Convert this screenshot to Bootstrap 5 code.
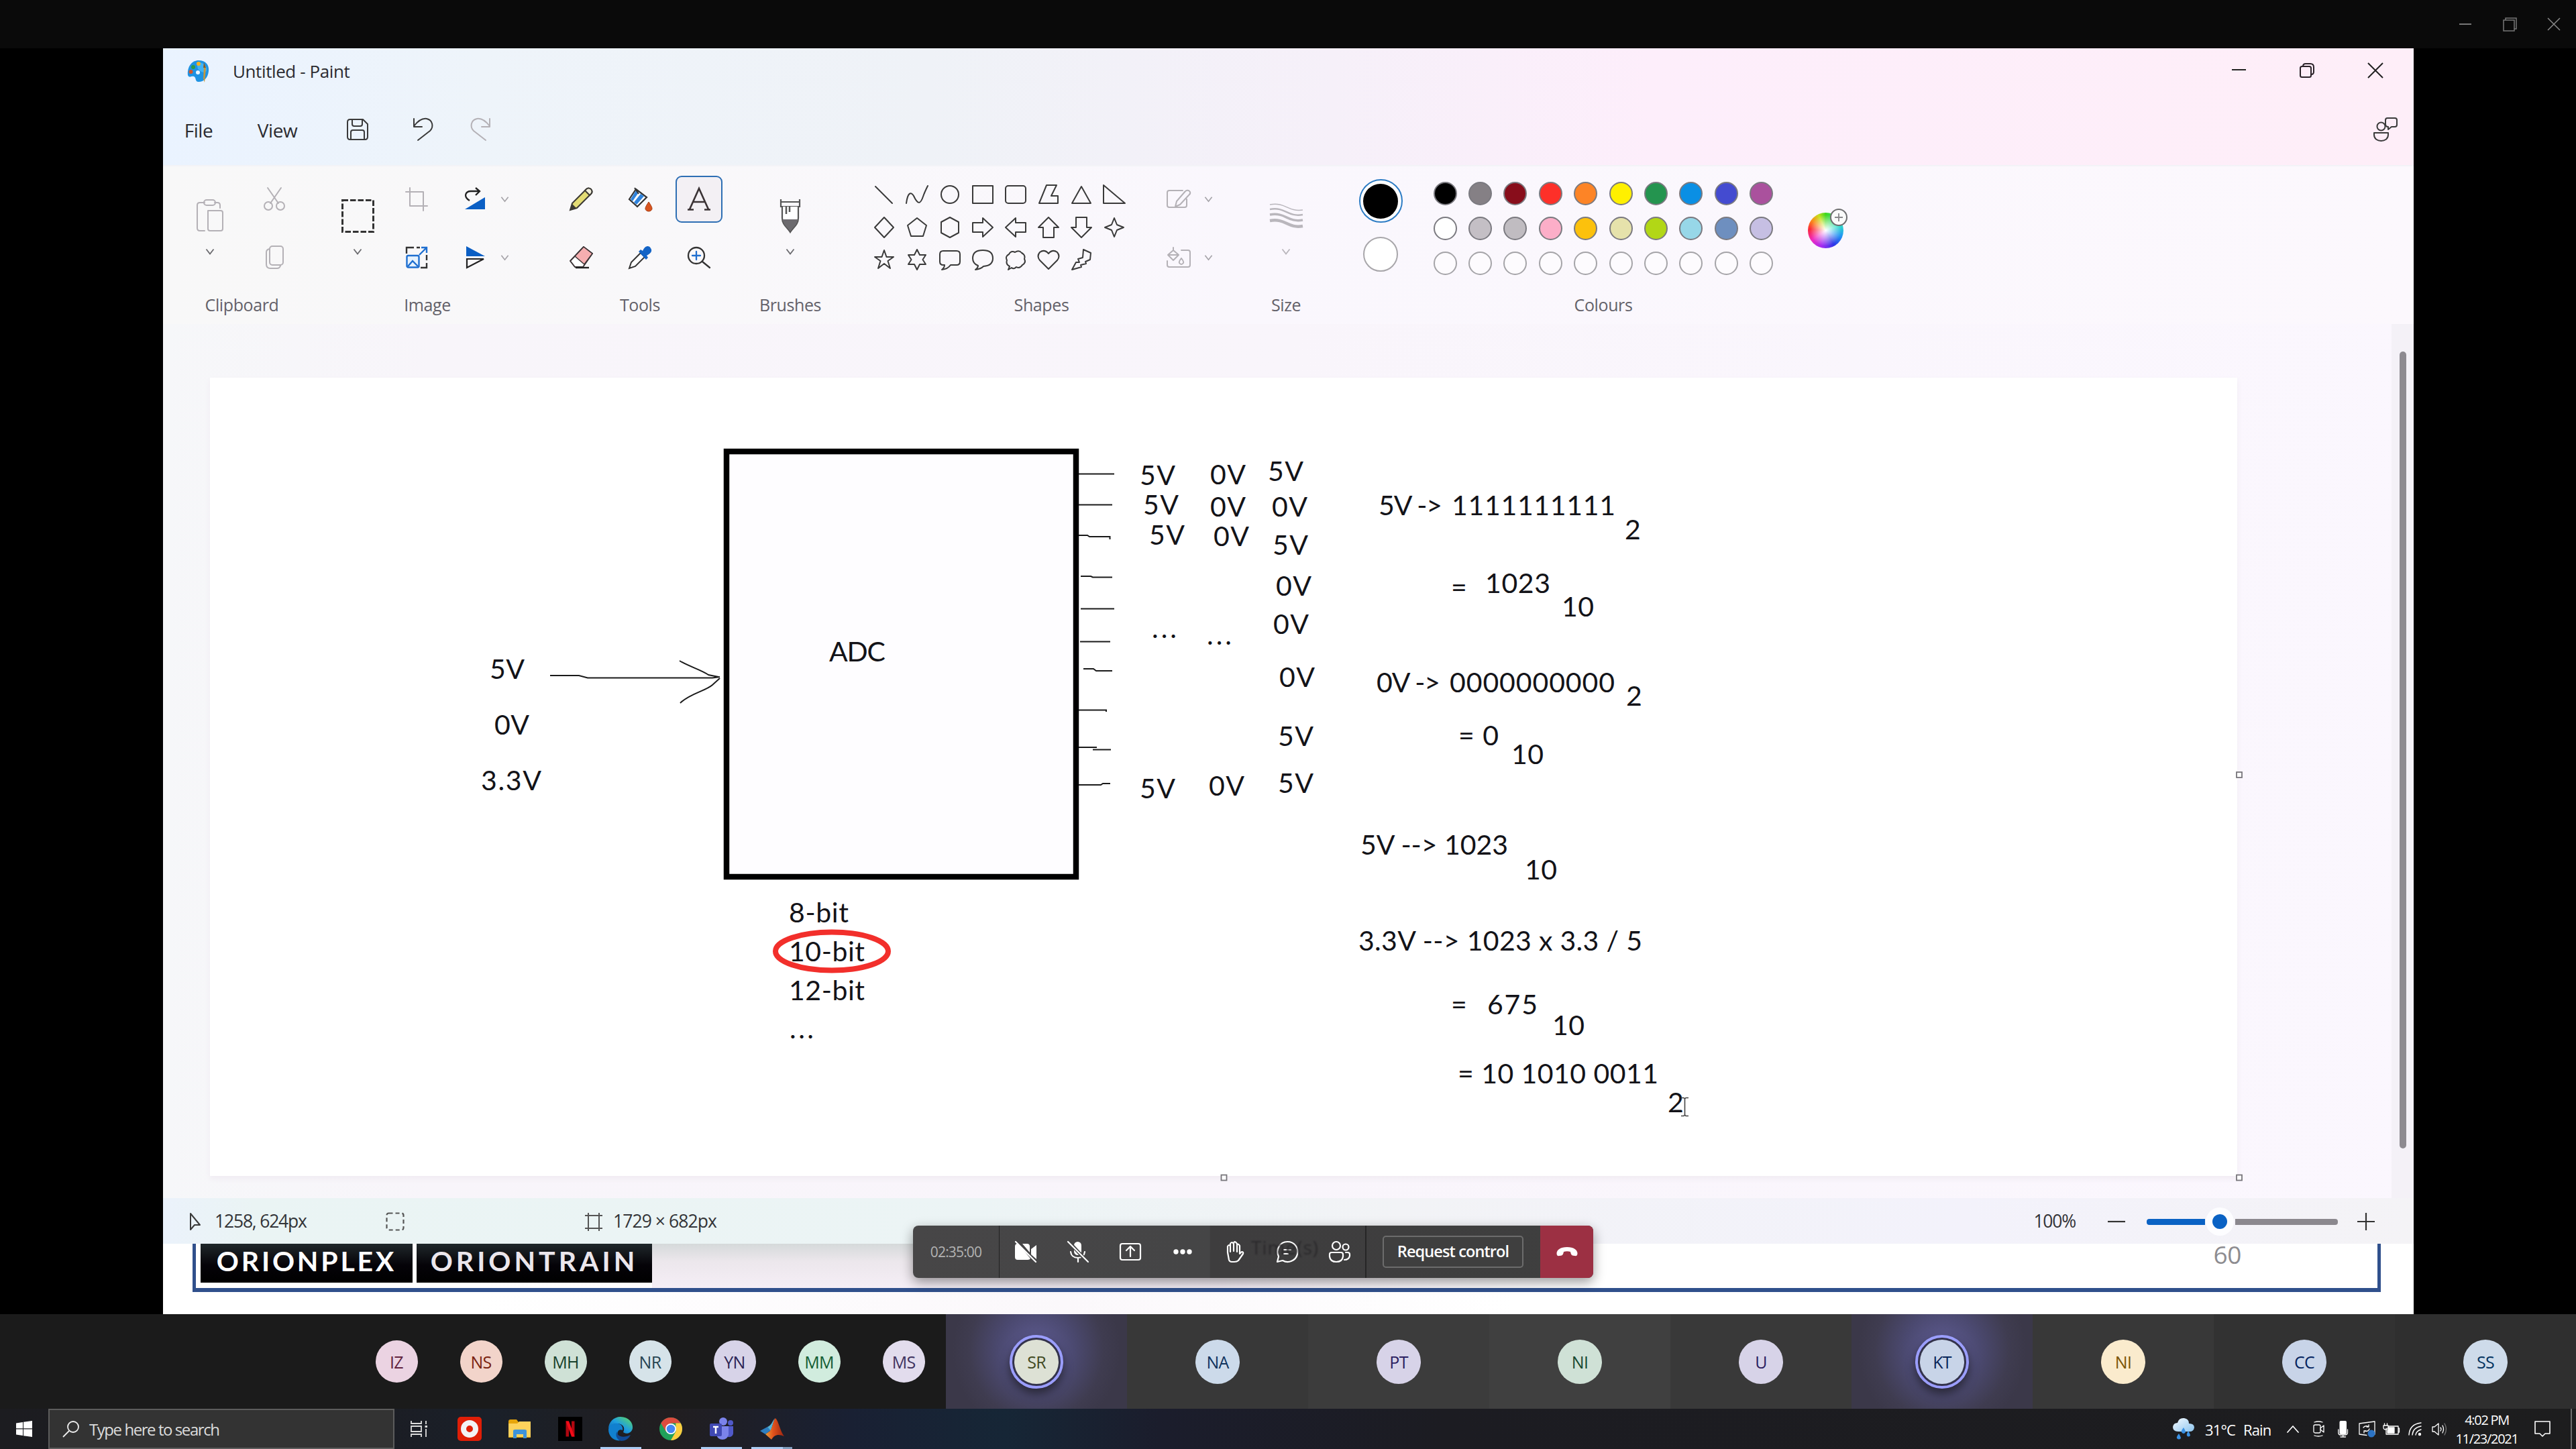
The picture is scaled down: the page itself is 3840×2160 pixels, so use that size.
<!DOCTYPE html>
<html lang="en">
<head>
<meta charset="utf-8">
<title>Untitled - Paint</title>
<link href="https://cdn.jsdelivr.net/npm/bootstrap@5.3.0/dist/css/bootstrap.min.css" rel="stylesheet">
<style>
body{width:3840px;height:2160px;overflow:hidden;background:#000;font-family:"Open Sans","Noto Sans",sans-serif;letter-spacing:-.025em;line-height:1.2}
svg{display:block;flex:none;overflow:visible}
.callbar{height:72px;background:#0a0a0a;padding-right:24px}
.callbar .wc{width:66px}
.ln{fill:none;stroke:#3a3a3a;stroke-width:2;stroke-linejoin:round;stroke-linecap:round}
.dim{stroke:#b4b1b6}
.stage{width:3355px;height:1887px;margin-left:243px;background:#fff}
.hdr{background:linear-gradient(90deg,#eaf3ff 0,#eef4fa 14%,#eff2f7 34%,#f6f0f9 52%,#fdeefb 66%,#feeef8 100%)}
.tbar{height:66px;font-size:26px;color:#2b2b30;padding-top:1px}
.mbar{height:108px;font-size:28px;color:#2b2b30;padding-top:2px}
.mbar .word{padding-top:3px}
.c106{width:106px}.c129{width:129px}.c109{width:109px}.c88{width:88px}.c82{width:82px}.c84{width:84px}.c102{width:102px}
.ribbon{height:237px;padding:5px 0 0 21px;background:linear-gradient(90deg,#f8f8f8 0,#f9f8fa 24%,#faf7fd 48%,#fcf8fd 100%);border-top:2px solid #f3f3f7}
.grp{flex:none}
.gbody{height:174px}
.glabel{height:54px;font-size:25px;color:#64626a}
.grid2{display:grid;grid-template-rows:87px 87px;place-items:center}
.tall{padding-top:44px}
.tall .chev{margin-top:22px}
.txtbtn{width:70px;height:70px;border:2px solid #2e6fb4;border-radius:9px;background:#f3f0f4}
.shapes{display:grid;grid-template-columns:repeat(8,48.96px);grid-template-rows:repeat(3,48.6px);place-items:center}
.swgrid{display:grid;grid-template-columns:repeat(10,52.4px);grid-template-rows:repeat(3,52.4px);place-items:center}
.sw{width:35px;height:35px;border-radius:50%;border:2px solid #7b7a80;background:#fdfbfe}
.sw.e{border-color:#a5a4a8}
.ring{width:65px;height:65px;border-radius:50%;border:2.5px solid #2d7cc4;background:#fff}
.ring i{width:52px;height:52px;border-radius:50%;background:#000}
.c2{width:52px;height:52px;border-radius:50%;border:2px solid #a8a6aa;background:#fff}
.wheelbox{width:80px}
.wheel{width:53px;height:53px;border-radius:50%;background:radial-gradient(circle,#fff 0,rgba(255,255,255,0) 62%),conic-gradient(#3fd81e,#2fe0c8 70deg,#2196f3 110deg,#2f36e8 150deg,#a52cf0 195deg,#f02bc0 235deg,#fb2a36 275deg,#fb8a1c 305deg,#c8e01c 335deg,#3fd81e)}
.wplus{right:-6px;top:-6px}
.work{height:1303px;padding:80px 0 0 70px;background:linear-gradient(90deg,#f6f7f9 0,#f8f5fa 12%,#f9f5fb 50%,#fbf7fe 100%)}
.sheet{width:3022px;height:1190px;background:#fff;box-shadow:0 4px 8px #f0ebf2}
.sbar{width:33px;background:#f4f1f7;margin-top:-80px;padding-top:41px}
.sthumb{width:10px;height:1188px;border-radius:5px;background:#8d8a90}
.ink{font-family:Lato,"Noto Sans",sans-serif;font-size:41px;fill:#131318;letter-spacing:0}
.status{height:68px;padding-top:2px;font-size:26.5px;letter-spacing:-.045em;color:#333438;background:linear-gradient(90deg,#ebf2fb 0,#eaf4f4 4%,#ecf4f5 36%,#f2f3f6 55%,#f3f2fb 80%,#f4f3f6 100%)}
.slide{height:105px;padding:0 49px 33px 44px;background:linear-gradient(90deg,#fff 0,#fff 14%,#fbf8fb 40%,#fff 60%)}
.frame{border:5px solid #30508c;border-width:0 5px 6px 5px;padding-left:7px;width:3262px;height:72px}
.brand{height:58px;background:linear-gradient(#20282b,#050308 55%,#000);color:#fff;font-family:Lato,sans-serif;font-weight:700;font-size:41px;line-height:52px;text-align:center;white-space:nowrap}
.b1{width:316px;letter-spacing:3.8px}
.b2{width:351px;margin-left:6px;letter-spacing:5px;color:#ebe6ec}
.haze{width:1400px;height:66px;background:linear-gradient(90deg,transparent 60%,#fff),linear-gradient(#d5d9da,#ece7ec 40%,#f5eef6)}
.pgno{font-size:37px;color:#8d8c90;margin-left:auto;margin-right:203px;line-height:32px}
.meet{left:1118px;top:1755px;width:1014px;height:78px;border-radius:8px;overflow:visible;background:linear-gradient(90deg,#474647 0,#454546 43.6%,#3e3d3e 43.7%,#3f3f3f 100%);box-shadow:0 6px 18px rgba(0,0,0,.4);color:#fff}
.meet .cell{width:78px}
.mt{width:129px;font-size:21px;letter-spacing:-.04em;color:#b3b3b3;border-right:1px solid #222;padding-top:2px}
.mend{border-right:2px solid #262626;width:79px!important}
.rq{width:210px;height:48px;border:2px solid #6c6c6c;border-radius:5px;background:#3f3f3f;font-size:23.5px;font-weight:600;letter-spacing:-.038em;margin:0 24px;color:#fff}
.hang{width:79px;background:#9c3043;border-radius:0 8px 8px 0}
.ghost{left:504px;top:16px;font-size:28px;color:#2b2a2c;letter-spacing:1px;filter:blur(1px)}
.wl{fill:none;stroke:#fff;stroke-width:2.2;stroke-linejoin:round;stroke-linecap:round}
.wf{fill:#fff}
.people{height:141px;background:#1b1b1b}
.minis{width:1410px;padding-left:559.5px;gap:63px}
.av{width:63px;height:63px;border-radius:50%;font-size:25px;letter-spacing:-.03em}
.tile{width:270px}
.tile .av{width:66px;height:66px}
.speak{background:radial-gradient(ellipse 125px 130px at 50% 38%,#5f5c93 0,#4b4970 45%,#3f3c50 80%,#3b3849 100%)}
.speak .av{width:80px;height:80px;border:4px solid #9b9eff;background:#34334c;box-shadow:0 8px 14px #2a2937}
.speak .av span{width:66px;height:66px;border-radius:50%}
.task{height:60px;color:#fff;background:linear-gradient(90deg,#1c1c20 0,#1b1d24 15%,#1a2029 19%,#211e20 26%,#192033 33%,#162636 39%,#1b1d2c 45%,#1c1c22 56%,#1d1d1e 100%)}
.start{width:72px}
.find{width:516px;background:#333;border:2px solid #5c5c5c;font-size:24px;color:#dcdcdc;padding-left:20px;letter-spacing:-.06em}
.app{width:75.2px;height:60px}
.app.on::after{content:"";position:absolute;left:7px;bottom:0;width:61px;height:3px;background:#a9ccf4}
.app.two::after{background:linear-gradient(90deg,#a9ccf4 0 47px,#7f9cbd 47px)}
.tray{font-size:22px;letter-spacing:-.04em}
.ti{width:36px}
.clock{width:106px;font-size:20px;line-height:28px;letter-spacing:-.065em;padding-top:2px}
.peek{width:2px;background:#6d6d6d;margin-right:6px}
</style>
</head>
<body class="d-flex flex-column m-0">
<svg width="0" height="0" class="position-absolute"><defs>
<linearGradient id="edge1" x1="0" y1="1" x2="1" y2="0"><stop offset="0" stop-color="#0c59a4"/><stop offset=".5" stop-color="#1e9de0"/><stop offset="1" stop-color="#62e05a"/></linearGradient>
<linearGradient id="mat" x1="0" y1="0" x2="1" y2="0"><stop offset="0" stop-color="#e8a13a"/><stop offset=".4" stop-color="#e2541c"/><stop offset="1" stop-color="#9c2410"/></linearGradient>
<linearGradient id="cld" x1="0" y1="0" x2="1" y2="1"><stop offset="0" stop-color="#f6fbff"/><stop offset="1" stop-color="#8cc4ee"/></linearGradient>
<symbol id="chv" viewBox="0 0 14 12"><path d="M1.5 2.5 7 9.500 12.500 2.500" fill="none" stroke="currentColor" stroke-width="1.800"/></symbol>
</defs></svg>

<header class="callbar d-flex justify-content-end align-items-center">
  <div class="wc d-flex justify-content-center"><svg width="18" height="20"><path d="M0 10H18" stroke="#777" stroke-width="2"/></svg></div>
  <div class="wc d-flex justify-content-center"><svg width="20" height="21" fill="none" stroke="#777" stroke-width="1.500"><path d="M1 4H17V20H1ZM4 4V1H20V17H17"/></svg></div>
  <div class="wc d-flex justify-content-center" style="margin-right:-24px"><svg width="18" height="18"><path d="M0 0 18 18M18 0 0 18" stroke="#8a8a8a" stroke-width="1.500"/></svg></div>
</header>

<main class="stage position-relative d-flex flex-column">
  <div class="hdr">
    <div class="tbar d-flex align-items-center">
      <div class="c106 d-flex justify-content-center">
        <svg width="34" height="34" viewBox="0 0 34 34"><path d="M17 1C28 1 33 8 32 17 31 27 25 33 17 33 11 33 14 26 10 25 6 24 3 28 1 23 0 10 7 1 17 1Z" fill="#1f93e3"/><path d="M14 4C24 3 30 9 29 16 27 22 20 18 16 14Z" fill="#41b3f5"/><circle cx="9" cy="11" r="3" fill="#2f9a48"/><circle cx="17" cy="6" r="3" fill="#f3b11f"/><circle cx="5.500" cy="18" r="3" fill="#d2572c"/><circle cx="16" cy="19" r="3" fill="#eef7fe"/><path d="M25 11 28 12 26 34 24 28Z" fill="#c5983c"/><path d="M25 4 28 12H24Z" fill="#8a5c23"/></svg>
      </div>
      <div style="padding-top:2px;margin-left:-2px">Untitled - Paint</div>
      <div class="ms-auto d-flex" style="margin-right:6px;margin-top:-2px">
        <div class="c102 d-flex justify-content-center align-items-center"><svg width="21" height="22"><path d="M0 10H21" stroke="#222" stroke-width="2"/></svg></div>
        <div class="c102 d-flex justify-content-center align-items-center"><svg width="22" height="22" class="ln" style="stroke:#2a2228"><rect x="1" y="5" width="16" height="16" rx="2.500"/><path d="M5 5C5 2 6 1 9 1H16C20 1 21 3 21 6V13C21 16 20 17 17 17"/></svg></div>
        <div class="c102 d-flex justify-content-center align-items-center"><svg width="22" height="22"><path d="M0 0 22 22M22 0 0 22" stroke="#222" stroke-width="2"/></svg></div>
      </div>
    </div>
    <nav class="mbar d-flex align-items-center">
      <div class="c106 word text-center">File</div>
      <div class="c129 word text-center">View</div>
      <div class="c109 d-flex justify-content-center"><svg width="32" height="32" class="ln"><path d="M5 1H24L31 8V27Q31 31 27 31H5Q1 31 1 27V5Q1 1 5 1ZM8 1V8Q8 11 11 11H20Q23 11 23 8V1M6 31V20Q6 17 9 17H23Q26 17 26 20V31"/></svg></div>
      <div class="c88 d-flex justify-content-center"><svg width="30" height="34" class="ln"><path d="M1 1V13H13M1 12C8 3 14 0 20 1 29 3 31 13 25 19L7 33"/></svg></div>
      <div class="c82 d-flex justify-content-center"><svg width="30" height="34" class="ln dim"><path d="M29 1V13H17M29 12C22 3 16 0 10 1 1 3-1 13 5 19L23 33"/></svg></div>
      <div class="c84 ms-auto d-flex justify-content-center"><svg width="36" height="36" class="ln"><circle cx="11.500" cy="13.500" r="6"/><path d="M1 23H22V26C22 32 17 35 11.500 35 6 35 1 32 1 26ZM21 1H32Q35 1 35 4V11Q35 14 32 14H27L22 18V14Q18 14 18 10V4Q18 1 21 1Z"/></svg></div>
    </nav>
  </div>

  <section class="ribbon d-flex">
    <div class="grp" style="width:193px">
      <div class="gbody d-flex">
        <div class="tall d-flex flex-column align-items-center" style="width:97px">
          <svg width="40" height="50" class="ln dim"><path d="M12 5H5Q1 5 1 9V43Q1 47 5 47H12M27 5H31Q35 5 35 9V13M17 17H36Q39 17 39 20V44Q39 47 36 47H20Q17 47 17 44V17"/><rect x="11" y="1" width="17" height="8" rx="4"/></svg>
          <svg class="chev" width="14" height="12" color="#6b6b6f"><use href="#chv"/></svg>
        </div>
        <div class="grid2" style="width:96px">
          <svg width="32" height="35" class="ln dim"><path d="M6 1 22 24M26 1 10 24"/><circle cx="7" cy="28" r="6"/><circle cx="25" cy="28" r="6"/></svg>
          <svg width="27" height="35" class="ln dim"><rect x="6" y="1" width="20" height="28" rx="4"/><path d="M6 5Q1 6 1 10V28Q1 34 7 34H17Q21 34 22 30"/></svg>
        </div>
      </div>
      <div class="glabel d-flex align-items-center justify-content-center">Clipboard</div>
    </div>
    <div class="grp" style="width:282px;margin-left:39px">
      <div class="gbody d-flex">
        <div class="tall d-flex flex-column align-items-center" style="width:74px">
          <svg width="49" height="50"><rect x="1.500" y="1.500" width="46" height="47" fill="none" stroke="#333" stroke-width="3" stroke-dasharray="8.500 3"/></svg>
          <svg class="chev" width="14" height="12" color="#6b6b6f"><use href="#chv"/></svg>
        </div>
        <div class="grid2" style="grid-template-columns:101px 73px 16px">
          <svg width="32" height="34" class="ln dim"><path d="M0 6H26V34M6 0V27H32"/></svg>
          <svg width="32" height="32"><path d="M31 13V31H1Z" fill="#0b5fc4"/><path d="M8 18C-2 12 2 4 10 4H22M17-1 23 4 17 10" fill="none" stroke="#222" stroke-width="2.300"/></svg>
          <svg width="13" height="12" color="#a5a3a8"><use href="#chv"/></svg>
          <svg width="32" height="32"><path d="M1 10V1H12M16 1H21M31 12V20M31 24V31H22" fill="none" stroke="#333" stroke-width="2.400"/><rect x="1.500" y="13" width="18" height="17.500" rx="2" fill="#e6f2fd" stroke="#1f6fd0" stroke-width="2.400"/><path d="M3 29 10 21 18 29M20 12 30 2M23 1H31V9" fill="none" stroke="#1f6fd0" stroke-width="2.400"/></svg>
          <svg width="32" height="34"><path d="M3 0V15H31Z" fill="#0b5fc4"/><path d="M4 19H29L4 32Z" fill="none" stroke="#222" stroke-width="2.200"/></svg>
          <svg width="13" height="12" color="#a5a3a8"><use href="#chv"/></svg>
        </div>
      </div>
      <div class="glabel d-flex align-items-center justify-content-center">Image</div>
    </div>
    <div class="grp" style="width:264px;margin-left:44px">
      <div class="gbody grid2" style="grid-template-columns:88px 88px 88px">
        <svg width="36" height="36" viewBox="0 0 36 36"><path d="M2 34 5 24 26 3Q29 0 33 3 36 7 33 10L12 31Z" fill="#e3dc74" stroke="#3c3a34" stroke-width="2"/><path d="M26 3Q29 0 33 3 36 7 33 10L31 12 24 5Z" fill="#f2efdc" stroke="#3c3a34" stroke-width="2"/><path d="M2 34 5 25 11 31Z" fill="#3c3a34"/></svg>
        <svg width="36" height="36" viewBox="0 0 36 36"><path d="M12 3 28 15 14 29 2 18Z" fill="#fff" stroke="#333" stroke-width="2.200"/><path d="M12 5 16 8 7 21 4 18Z" fill="#2f83dc"/><path d="M19 10 24 13.500 13 26 9 22.500Z" fill="#2f83dc"/><path d="M10 1 16 10" stroke="#333" stroke-width="2"/><path d="M31 22C27 28 26 30 26 32A5 4 0 0 0 36 32C36 30 35 28 31 22Z" fill="#d9541e" stroke="#a33a10"/></svg>
        <div class="txtbtn d-flex align-items-center justify-content-center"><svg width="34" height="34"><path d="M3 32 17 1 31 32M8 21H26M0 32.500H9M25 32.500H34" fill="none" stroke="#3b3335" stroke-width="2.600"/></svg></div>
        <svg width="36" height="36" viewBox="0 0 36 36"><path d="M22 2 35 12 21 32H9L2 23Z" fill="#fff" stroke="#3a3234" stroke-width="2" stroke-linejoin="round"/><path d="M22 2 35 12 23 28 9 16Z" fill="#f6aeb0" stroke="#3a3234" stroke-width="1.500"/><path d="M10 33H30" stroke="#222" stroke-width="2.400"/></svg>
        <svg width="36" height="36" viewBox="0 0 36 36"><path d="M2 34 5 25 19 11 25 17 11 31Z" fill="#fff" stroke="#333" stroke-width="2"/><path d="M16 9 19 6 22 8C26-1 32 0 34 4 37 8 34 12 28 15L30 18 27 21Z" fill="#1464c6"/></svg>
        <svg width="34" height="32" class="ln" style="stroke:#333;stroke-width:2.300"><circle cx="13" cy="13" r="12"/><path d="M22 22 33 31"/><path d="M13 7V19M7 13H19" stroke="#1f6fd0"/></svg>
      </div>
      <div class="glabel d-flex align-items-center justify-content-center">Tools</div>
    </div>
    <div class="grp" style="width:100px;margin-left:42px">
      <div class="gbody tall d-flex flex-column align-items-center">
        <svg width="32" height="50" viewBox="0 0 32 50"><path d="M2 0V11H30V0M1 4H31" fill="none" stroke="#555" stroke-width="2.200"/><path d="M4 11V28C4 38 12 42 16 49 20 42 28 38 28 28V11" fill="#fff" stroke="#555" stroke-width="2.200"/><path d="M5 30H27C27 38 20 42 16 48 12 42 5 38 5 30Z" fill="#6c6a6e"/><path d="M10 11V22M15 11V19" stroke="#555" stroke-width="2.500"/></svg>
        <svg class="chev" width="14" height="12" color="#6b6b6f"><use href="#chv"/></svg>
      </div>
      <div class="glabel d-flex align-items-center justify-content-center">Brushes</div>
    </div>
    <div class="grp" style="width:517px;margin-left:66px">
      <div class="gbody d-flex">
        <div class="shapes" style="margin-top:13px;height:146px">
          <svg width="30" height="30" class="ln"><path d="M2 3 27 28"/></svg>
          <svg width="34" height="30" class="ln"><path d="M1 28C3 12 8 10 12 17 18 30 22 30 26 18 28 12 30 8 33 2"/></svg>
          <svg width="30" height="30" class="ln"><circle cx="15" cy="15" r="13"/></svg>
          <svg width="32" height="30" class="ln"><rect x="1" y="2" width="30" height="26"/></svg>
          <svg width="32" height="30" class="ln"><rect x="1" y="2" width="30" height="26" rx="4"/></svg>
          <svg width="30" height="30" class="ln"><path d="M12 1H27L19 17H29V28H1Z"/></svg>
          <svg width="30" height="30" class="ln"><path d="M15 3 29 28H1Z"/></svg>
          <svg width="34" height="30" class="ln"><path d="M1 1V28H33Z"/></svg>
          <svg width="30" height="30" class="ln"><path d="M15 0 29 15 15 30 1 15Z"/></svg>
          <svg width="30" height="30" class="ln"><path d="M15 1 29 12 24 28H6L1 12Z"/></svg>
          <svg width="30" height="30" class="ln"><path d="M15 0 28 7V23L15 30 2 23V7Z"/></svg>
          <svg width="32" height="30" class="ln"><path d="M1 8H16V1L31 15 16 29V22H1Z"/></svg>
          <svg width="32" height="30" class="ln"><path d="M31 8H16V1L1 15 16 29V22H31Z"/></svg>
          <svg width="32" height="30" class="ln"><path d="M8 30V15H1L16 0 31 15H24V30Z"/></svg>
          <svg width="32" height="30" class="ln"><path d="M8 0V15H1L16 30 31 15H24V0Z"/></svg>
          <svg width="30" height="30" class="ln"><path d="M15 1 19 11 29 15 19 19 15 29 11 19 1 15 11 11Z"/></svg>
          <svg width="30" height="30" class="ln"><path d="M15 1 18.500 11H29L20.500 17 24 28 15 21 6 28 9.500 17 1 11H11.500Z"/></svg>
          <svg width="30" height="30" class="ln"><path d="M15 0 19 8H28L23.500 15 28 22H19L15 30 11 22H2L6.500 15 2 8H11Z"/></svg>
          <svg width="34" height="30" class="ln"><path d="M7 2H27Q32 2 32 7V18Q32 23 27 23H18Q14 29 5 30 9 27 9 23H7Q2 23 2 18V7Q2 2 7 2Z"/></svg>
          <svg width="34" height="30" class="ln"><path d="M10 24Q2 21 2 13 2 1 17 1 32 1 32 13 32 24 18 25 14 29 6 30 10 27 10 24Z"/></svg>
          <svg width="32" height="30" class="ln"><path d="M7 25Q1 22 3 16 0 10 6 7 9 1 15 4 21 0 25 5 31 8 29 14 32 20 26 23 22 29 17 26 13 30 10 27L5 30Z"/></svg>
          <svg width="34" height="30" class="ln"><path d="M17 29 4 16Q-1 10 4 4 11-1 17 6 23-1 30 4 35 10 30 16Z"/></svg>
          <svg width="30" height="32" class="ln"><path d="M18 1 29 6 28 16 21 19 22 22 14 24 15 27 1 31 7 20 12 20 10 15 17 13Z"/></svg>
        </div>
        <div class="grid2" style="grid-template-columns:72px 18px;margin-left:35px">
          <svg width="36" height="28" class="ln dim"><path d="M30 14V23Q30 26 27 26H4Q1 26 1 23V4Q1 1 4 1H24M28 2Q32-1 35 3 36 6 33 8L20 22 13 25 15 17Z"/></svg>
          <svg width="13" height="12" color="#a5a3a8"><use href="#chv"/></svg>
          <svg width="36" height="30" class="ln dim"><path d="M22 4H32Q35 4 35 7V26Q35 29 32 29H4Q1 29 1 26V20M10 0V4L18 11 10 19 2 11 10 4M3 11H17M22 16Q18 21 19 23 22 27 25 23 26 21 22 16"/></svg>
          <svg width="13" height="12" color="#a5a3a8"><use href="#chv"/></svg>
        </div>
      </div>
      <div class="glabel d-flex align-items-center justify-content-center">Shapes</div>
    </div>
    <div class="grp" style="width:100px;margin-left:56px">
      <div class="gbody tall d-flex flex-column align-items-center">
        <svg width="49" height="50" fill="none" stroke="#b9b6bc"><path d="M0 8C24 4 26 19 49 16" stroke-width="1.500"/><path d="M0 15C24 11 26 27 49 23" stroke-width="2.500"/><path d="M0 23C24 19 26 35 49 31" stroke-width="3.500"/><path d="M0 32C24 28 26 44 49 40" stroke-width="4.500"/></svg>
        <svg class="chev" width="14" height="12" color="#b9b6bc"><use href="#chv"/></svg>
      </div>
      <div class="glabel d-flex align-items-center justify-content-center">Size</div>
    </div>
    <div class="grp" style="width:744px;margin-left:51px">
      <div class="gbody d-flex">
        <div class="d-flex flex-column align-items-center" style="width:80px;padding-top:14px">
          <div class="ring d-flex align-items-center justify-content-center"><i></i></div>
          <div class="c2" style="margin-top:21px"></div>
        </div>
        <div class="swgrid" style="margin:9px 0 0 30px;height:157px">
          <i class="sw" style="background:#000"></i><i class="sw" style="background:#858085"></i><i class="sw" style="background:#880d1b"></i><i class="sw" style="background:#fd3029"></i><i class="sw" style="background:#fd8426"></i><i class="sw" style="background:#fff000"></i><i class="sw" style="background:#24944f"></i><i class="sw" style="background:#0a8fe4"></i><i class="sw" style="background:#444bd0"></i><i class="sw" style="background:#aa519d"></i>
          <i class="sw" style="background:#fff"></i><i class="sw" style="background:#c4bfc5"></i><i class="sw" style="background:#c0bcc1"></i><i class="sw" style="background:#fcaec8"></i><i class="sw" style="background:#fcc10c"></i><i class="sw" style="background:#e6e2ab"></i><i class="sw" style="background:#b2d716"></i><i class="sw" style="background:#97d7e8"></i><i class="sw" style="background:#6e8fbf"></i><i class="sw" style="background:#c6bfe3"></i>
          <i class="sw e"></i><i class="sw e"></i><i class="sw e"></i><i class="sw e"></i><i class="sw e"></i><i class="sw e"></i><i class="sw e"></i><i class="sw e"></i><i class="sw e"></i><i class="sw e"></i>
        </div>
        <div class="wheelbox d-flex justify-content-center" style="margin-left:30px;padding-top:64px">
          <div class="wheel position-relative"><svg class="wplus position-absolute" width="26" height="26"><circle cx="13" cy="13" r="12" fill="#fafafa" stroke="#6e6e70" stroke-width="2"/><path d="M13 7V19M7 13H19" stroke="#88878a" stroke-width="1.800"/></svg></div>
        </div>
      </div>
      <div class="glabel d-flex align-items-center justify-content-center">Colours</div>
    </div>
  </section>

  <section class="work d-flex">
    <div class="sheet">
      <svg width="3022" height="1190" viewBox="313 563 3022 1190">
        <rect x="1083" y="673" width="521" height="634" fill="#fefdff" stroke="#000" stroke-width="8.500"/>
        <g fill="none" stroke="#1a1a1a" stroke-width="2">
          <path d="M820 1007H863L876 1010.500H1062L1073 1009M1013 985C1028 994 1044 998 1056 1006L1071 1009M1014 1048C1028 1034 1052 1030 1062 1021L1073 1011"/>
          <path d="M1608 706.500H1661M1608 752.500H1658M1608 798H1621L1624 800H1654.500V804M1611 859H1626L1629 860.500H1658M1611 907.500H1661M1610 956.500H1655M1615 997H1630L1634 1000H1658M1608 1058.500H1649V1061M1608 1114H1635M1629 1117.500H1656M1608 1170H1641L1644 1168H1655"/>
        </g>
        <ellipse cx="1240" cy="1418" rx="84" ry="28.500" fill="none" stroke="#f22f2b" stroke-width="8"/>
        <g class="ink">
          <text x="730" y="1012" textLength="52">5V</text><text x="737" y="1095" textLength="52">0V</text><text x="717" y="1178" textLength="90">3.3V</text>
          <text x="1236" y="986" textLength="84">ADC</text>
          <text x="1176" y="1375" textLength="89">8-bit</text><text x="1176" y="1433" textLength="113">10-bit</text><text x="1176" y="1491" textLength="113">12-bit</text><text x="1177" y="1548" textLength="36">...</text>
          <text x="1699" y="723" textLength="53">5V</text><text x="1804" y="722" textLength="53">0V</text><text x="1890" y="717" textLength="53">5V</text>
          <text x="1704" y="767" textLength="53">5V</text><text x="1804" y="770" textLength="53">0V</text><text x="1896" y="770" textLength="53">0V</text>
          <text x="1713" y="812" textLength="53">5V</text><text x="1809" y="814" textLength="53">0V</text><text x="1897" y="827" textLength="53">5V</text>
          <text x="1902" y="888" textLength="53">0V</text><text x="1898" y="945" textLength="53">0V</text>
          <text x="1717" y="951" textLength="37">...</text><text x="1799" y="961" textLength="37">...</text>
          <text x="1907" y="1024" textLength="53">0V</text><text x="1905" y="1112" textLength="53">5V</text>
          <text x="1699" y="1190" textLength="53">5V</text><text x="1802" y="1186" textLength="53">0V</text><text x="1905" y="1182" textLength="53">5V</text>
          <text x="2055" y="768" textLength="95">5V -&gt;</text><text x="2164" y="768" textLength="244">1111111111</text><text x="2422" y="804">2</text>
          <text x="2163" y="890">=</text><text x="2214" y="884" textLength="97">1023</text><text x="2328" y="919" textLength="48">10</text>
          <text x="2052" y="1032" textLength="95">0V -&gt;</text><text x="2161" y="1032" textLength="246">0000000000</text><text x="2424" y="1052">2</text>
          <text x="2174" y="1111" textLength="60">= 0</text><text x="2253" y="1139" textLength="48">10</text>
          <text x="2028" y="1274" textLength="220">5V --&gt; 1023</text><text x="2273" y="1311" textLength="48">10</text>
          <text x="2025" y="1417" textLength="423">3.3V --&gt; 1023 x 3.3 / 5</text>
          <text x="2163" y="1512">=</text><text x="2217" y="1512" textLength="75">675</text><text x="2314" y="1543" textLength="48">10</text>
          <text x="2173" y="1615" textLength="299">= 10 1010 0011</text><text x="2486" y="1658">2</text>
        </g>
        <path d="M2506 1636.500H2510L2511.500 1638 2513 1636.500H2517M2511.500 1638V1662M2506 1663.500H2510L2511.500 1662 2513 1663.500H2517" fill="none" stroke="#444" stroke-width="1.600"/>
        <g fill="#fff" stroke="#77757a" stroke-width="1.800"><rect x="1820.500" y="1751.500" width="8" height="8"/><rect x="3334" y="1151" width="8" height="8"/><rect x="3334" y="1751.500" width="8" height="8"/></g>
      </svg>
    </div>
    <div class="sbar ms-auto d-flex justify-content-center"><div class="sthumb"></div></div>
  </section>

  <footer class="status d-flex align-items-center">
    <svg width="17" height="27" class="ln" style="margin-left:39px"><path d="M2 1V25L8 18H16Z"/></svg>
    <div style="width:254px;margin-left:21px">1258, 624px</div>
    <svg width="28" height="28" style="margin-left:1px"><rect x="1.500" y="1.500" width="25" height="25" rx="3" fill="none" stroke="#555" stroke-width="2.200" stroke-dasharray="6 4"/></svg>
    <svg width="26" height="27" class="ln" style="margin-left:269px;stroke-linecap:butt"><path d="M5 0V27M21 0V27M0 4H26M0 23H26" stroke="#555"/></svg>
    <div style="margin-left:16px;letter-spacing:-.035em">1729 × 682px</div>
    <div class="ms-auto">100%</div>
    <svg width="26" height="26" style="margin-left:48px"><path d="M0 13H26" stroke="#333" stroke-width="2.200"/></svg>
    <div class="d-flex align-items-center" style="width:285px;margin-left:32px">
      <div style="width:87px;height:9px;background:#0a62c4;border-radius:4px 0 0 4px"></div>
      <div class="rounded-circle" style="width:22px;height:22px;margin:0 12px 0 11px;background:#0a62c4;box-shadow:0 0 0 10px #fdfdff"></div>
      <div class="flex-grow-1" style="height:9px;background:#8b888e;border-radius:0 4px 4px 0"></div>
    </div>
    <svg width="26" height="26" style="margin:0 58px 0 29px"><path d="M0 13H26M13 0V26" stroke="#333" stroke-width="2.200"/></svg>
  </footer>

  <div class="slide">
    <div class="frame d-flex">
      <div class="brand b1">ORIONPLEX</div>
      <div class="brand b2">ORIONTRAIN</div>
      <div class="haze"></div>
      <div class="pgno">60</div>
    </div>
  </div>

  <div class="meet position-absolute d-flex align-items-stretch">
    <div class="ghost position-absolute">Time(s)</div>
    <div class="mt d-flex align-items-center justify-content-center">02:35:00</div>
    <div class="cell d-flex align-items-center justify-content-center"><svg width="32" height="32"><path d="M0 8Q0 4 4 4H5L23 26Q22 28 19 28H4Q0 28 0 24ZM11 4H18Q22 4 22 8V17ZM24 12 32 6V27L24 20Z" class="wf"/><path d="M1 1 31 31" class="wl"/></svg></div>
    <div class="cell d-flex align-items-center justify-content-center"><svg width="32" height="32"><rect x="10" y="1" width="11" height="20" rx="5.500" class="wf"/><path d="M5 16Q6 25 16 25 25 25 26 16M16 25V31" class="wl"/><path d="M3 2 31 32" stroke="#454546" stroke-width="5"/><path d="M1 1 31 31" class="wl"/></svg></div>
    <div class="cell d-flex align-items-center justify-content-center"><svg width="32" height="26" class="wl"><rect x="1" y="1" width="30" height="24" rx="3"/><path d="M16 20V6M10 11 16 5 22 11"/></svg></div>
    <div class="cell d-flex align-items-center justify-content-center"><svg width="28" height="8" class="wf"><circle cx="4" cy="4" r="3.700"/><circle cx="14" cy="4" r="3.700"/><circle cx="24" cy="4" r="3.700"/></svg></div>
    <div class="cell d-flex align-items-center justify-content-center"><svg width="26" height="32" class="wl"><path d="M2 17V8Q4 4 6 8V4Q8 0 11 4V3Q13-1 16 4V6Q18 3 20 7V19L23 16Q26 16 25 19L18 29Q16 31 12 31H8Q5 31 4 28ZM6 8V16M11 4V15M16 5V16"/></svg></div>
    <div class="cell d-flex align-items-center justify-content-center"><svg width="32" height="32" class="wl"><path d="M16 1A15 15 0 1 1 9 29L1 31 3 23A15 15 0 0 1 16 1ZM11 13H21M11 19H17"/></svg></div>
    <div class="cell mend d-flex align-items-center justify-content-center"><svg width="32" height="32" class="wl"><circle cx="11" cy="7" r="6"/><circle cx="25" cy="9" r="4.500"/><path d="M4 17H18Q21 17 21 20V23Q20 31 11 31 2 31 1 23V20Q1 17 4 17ZM25 17H28Q31 17 31 20V22Q30 28 23 28"/></svg></div>
    <button class="btn rq p-0 align-self-center">Request control</button>
    <div class="hang ms-auto d-flex align-items-center justify-content-center"><svg width="32" height="16"><path d="M16 1C26 1 31 5 31.500 10 31.500 14 30 14.500 27 14 22 13.500 22 12 21 8 18 7 14 7 11 8 10 12 10 13.500 5 14 2 14.500.500 14 .500 10 1 5 6 1 16 1Z" class="wf"/></svg></div>
  </div>
</main>

<section class="people d-flex">
  <div class="minis d-flex align-items-center">
    <div class="av d-flex align-items-center justify-content-center" style="background:#ebd3e2;color:#61233f">IZ</div>
    <div class="av d-flex align-items-center justify-content-center" style="background:#f2d4ca;color:#7a2410">NS</div>
    <div class="av d-flex align-items-center justify-content-center" style="background:#cfe1d6;color:#16402a">MH</div>
    <div class="av d-flex align-items-center justify-content-center" style="background:#d6e3e9;color:#274552">NR</div>
    <div class="av d-flex align-items-center justify-content-center" style="background:#d7d3e8;color:#2b2454">YN</div>
    <div class="av d-flex align-items-center justify-content-center" style="background:#d1ecde;color:#115c33">MM</div>
    <div class="av d-flex align-items-center justify-content-center" style="background:#e2dced;color:#40335f">MS</div>
  </div>
  <div class="tile speak d-flex align-items-center justify-content-center"><div class="av d-flex align-items-center justify-content-center"><span class="d-flex align-items-center justify-content-center" style="background:#dde1d5;color:#414a22">SR</span></div></div>
  <div class="tile d-flex align-items-center justify-content-center" style="background:#383838"><div class="av d-flex align-items-center justify-content-center" style="background:#ccdaea;color:#0f335d">NA</div></div>
  <div class="tile d-flex align-items-center justify-content-center" style="background:#3c3c3c"><div class="av d-flex align-items-center justify-content-center" style="background:#d7d3e8;color:#2b2060">PT</div></div>
  <div class="tile d-flex align-items-center justify-content-center" style="background:#404040"><div class="av d-flex align-items-center justify-content-center" style="background:#cfe1d6;color:#174a30">NI</div></div>
  <div class="tile d-flex align-items-center justify-content-center" style="background:#393939"><div class="av d-flex align-items-center justify-content-center" style="background:#d7d3e8;color:#2b2060">U</div></div>
  <div class="tile speak d-flex align-items-center justify-content-center"><div class="av d-flex align-items-center justify-content-center"><span class="d-flex align-items-center justify-content-center" style="background:#c8d4e8;color:#0a2659">KT</span></div></div>
  <div class="tile d-flex align-items-center justify-content-center" style="background:#383838"><div class="av d-flex align-items-center justify-content-center" style="background:#faebcd;color:#7a5606">NI</div></div>
  <div class="tile d-flex align-items-center justify-content-center" style="background:#323232"><div class="av d-flex align-items-center justify-content-center" style="background:#c8d4e8;color:#052460">CC</div></div>
  <div class="tile d-flex align-items-center justify-content-center" style="background:#2f2f2f"><div class="av d-flex align-items-center justify-content-center" style="background:#cedbea;color:#053460">SS</div></div>
</section>

<footer class="task d-flex">
  <div class="start d-flex align-items-center justify-content-center"><svg width="24" height="24" class="wf"><path d="M0 3.500 10 2V11.300H0ZM11 1.800 24 0V11.300H11ZM0 12.500H10V22L0 20.500ZM11 12.500H24V24L11 22.200Z"/></svg></div>
  <div class="find d-flex align-items-center"><svg width="24" height="24" fill="none" stroke="#eee" stroke-width="1.800"><circle cx="15" cy="9" r="8"/><path d="M9 15 0 24"/></svg><span style="margin-left:15px;padding-top:2px">Type here to search</span></div>
  <div class="d-flex">
    <div class="app d-flex align-items-center justify-content-center" style="width:74px"><svg width="26" height="24" fill="none" stroke="#ddd" stroke-width="1.800"><path d="M1 0V4H16V0M1 24V20H16V24M1 8H16V16H1ZM23 0V5M23 12V24"/><path d="M21.500 8.500H25" stroke-width="3"/></svg></div>
    <div class="app d-flex align-items-center justify-content-center"><svg width="36" height="36"><rect width="36" height="36" rx="5" fill="#df1e07"/><circle cx="18" cy="18" r="9" fill="none" stroke="#f2f2f5" stroke-width="8"/></svg></div>
    <div class="app d-flex align-items-center justify-content-center"><svg width="33" height="30"><path d="M0 4Q0 1 3 1H12L15 5H33V28H0Z" fill="#e7a50b"/><path d="M0 7H13L16 4H33V27H0Z" fill="#fdd25c"/><path d="M7 29V18Q7 16 10 16H24Q27 16 27 18V29H22V23H12V29Z" fill="#3e93d9"/></svg></div>
    <div class="app d-flex align-items-center justify-content-center"><svg width="36" height="36"><path d="M0 0H36V36H0Z" fill="#000"/><path d="M11.500 6.500H16V29.500H11.500ZM20 6.500H24.500V29.500H20Z" fill="#b00710"/><path d="M11.500 6.500H16L24.500 29.500H20Z" fill="#f10b17"/></svg></div>
    <div class="app on position-relative d-flex align-items-center justify-content-center"><svg width="36" height="36"><path d="M18 0C30 0 37 9 36 17 35 24 27 27 22 23 26 15 20 10 13 10 6 10 2 14 0 18 0 8 8 0 18 0Z" fill="url(#edge1)"/><path d="M0 19C1 12 8 9 14 10 20 11 22 16 21 20 13 16 9 30 22 34 10 39 0 30 0 19Z" fill="#1180cf"/><path d="M13 22C12 28 20 33 33 27 30 33 25 36 19 36 11 34 10 25 13 22Z" fill="#104a96"/></svg></div>
    <div class="app d-flex align-items-center justify-content-center"><svg width="34" height="34" viewBox="-17 -17 34 34"><circle r="17" fill="#1fa15a"/><path d="M-14.700-8.500A17 17 0 0 1 14.700-8.500H0L-7.400 4Z" fill="#dd4b3e"/><path d="M14.700-8.500A17 17 0 0 1 0 17L7.400 4V-8.500Z" fill="#fdcd40"/><circle r="8" fill="#fff"/><circle r="6.300" fill="#4486f3"/></svg></div>
    <div class="app on position-relative d-flex align-items-center justify-content-center"><svg width="36" height="34"><circle cx="20" cy="6" r="6" fill="#7b83eb"/><circle cx="31" cy="8" r="4" fill="#5059c9"/><path d="M26 13H35V24Q34 30 27 29Z" fill="#5059c9"/><path d="M10 13H28V26Q26 33 19 33 12 33 10 26Z" fill="#7b83eb"/><rect y="9" width="18" height="19" rx="2" fill="#4049b4"/><path d="M5 14H13M9 14V24" stroke="#fff" stroke-width="2.500"/></svg></div>
    <div class="app on two position-relative d-flex align-items-center justify-content-center"><svg width="36" height="34"><path d="M0 20 11 14 16 19 8 25Z" fill="#2d7fc0"/><path d="M11 14C16 13 19 5 22 1L16 20Z" fill="#56b4d6"/><path d="M8 25 15 20C19 14 20 3 23 1 28 6 30 21 36 28 27 24 21 26 17 33Z" fill="url(#mat)"/></svg></div>
  </div>
  <div class="tray ms-auto d-flex align-items-stretch">
    <div class="d-flex align-items-center">
      <svg width="32" height="36" viewBox="0 0 32 36" style="margin-top:2px"><path d="M8 21Q0 21 0 14 1 8 7 8 9 0 17 1 24 2 24 9 32 9 32 15 31 21 25 21Z" fill="url(#cld)"/><path d="M16 15Q12 20 13 22 16 26 19 22 19 20 16 15ZM9 24Q5 29 6 31 9 34 12 31 12 29 9 24ZM23 20Q20 25 21 27 23 30 26 27 26 25 23 20Z" fill="#3a91e4"/></svg>
      <span style="width:57px;margin-left:16px;padding-top:2px">31°C</span><span style="width:63px;padding-top:2px">Rain</span>
    </div>
    <div class="ti d-flex align-items-center justify-content-center" style="margin-left:-7px;margin-right:2px"><svg width="18" height="11" class="wl" style="stroke-width:1.700"><path d="M1 10 9 1 17 10"/></svg></div>
    <div class="ti d-flex align-items-center justify-content-center"><svg width="17" height="22" class="wl" style="stroke-width:1.300"><rect x="1" y="5" width="10" height="12" rx="2"/><path d="M11 10 16 6V16L11 12M2 1Q8-1 14 1M2 21Q8 23 14 21"/></svg></div>
    <div class="ti d-flex align-items-center justify-content-center"><svg width="15" height="25"><rect x="2.500" width="10.500" height="20" rx="2" class="wf"/><path d="M.800 13V18Q1 21 4 21H11Q14 21 14.500 18V13M7.700 21V24M4 24H11.500" class="wl" style="stroke-width:1.300"/></svg></div>
    <div class="ti d-flex align-items-center justify-content-center"><svg width="25" height="24" class="wl" style="stroke-width:1.300"><path d="M1 4 24 1V20M1 4V20L12 21.500M7 10Q10 6 15 9V6M15 9H12M16 12Q14 17 8 15V18M8 15H11"/><circle cx="19" cy="19" r="5.500" fill="#2c73c4" stroke="none"/></svg></div>
    <div class="ti d-flex align-items-center justify-content-center"><svg width="25" height="19" class="wl" style="stroke-width:1.300"><path d="M5 8V17H23V5H9M23 8H24.500V14H23M1 4H8V7Q7 10 4.500 10 1 10 1 7ZM2.500 1V4M6.500 1V4"/><path d="M8 7H17V15H7V11Q9 10 9 7Z" class="wf"/></svg></div>
    <div class="ti d-flex align-items-center justify-content-center"><svg width="20" height="20" class="wl" style="stroke-width:1.400"><path d="M1 19Q2 3 19 1M6 19Q7 8 19 6M11 19Q12 13 19 11"/><circle cx="17" cy="18" r="1.500" class="wf"/></svg></div>
    <div class="ti d-flex align-items-center justify-content-center"><svg width="22" height="19" class="wl" style="stroke-width:1.300"><path d="M1 6H4L10 1V18L4 13H1ZM13 7Q15 9.500 13 12M16 4Q19 9.500 16 15"/><path d="M19 1Q24 9 19 18" stroke="#777"/></svg></div>
    <div class="clock d-flex flex-column justify-content-center text-center"><div>4:02 PM</div><div>11/23/2021</div></div>
    <div class="d-flex align-items-center justify-content-center" style="width:60px"><svg width="24" height="24" class="wl" style="stroke-width:1.600"><path d="M1 1H23V19H16L12 23 8 19H1Z"/></svg></div>
    <div style="width:12px"></div>
    <div class="peek"></div>
  </div>
</footer>
<script src="https://cdn.jsdelivr.net/npm/bootstrap@5.3.0/dist/js/bootstrap.bundle.min.js"></script>
</body>
</html>
